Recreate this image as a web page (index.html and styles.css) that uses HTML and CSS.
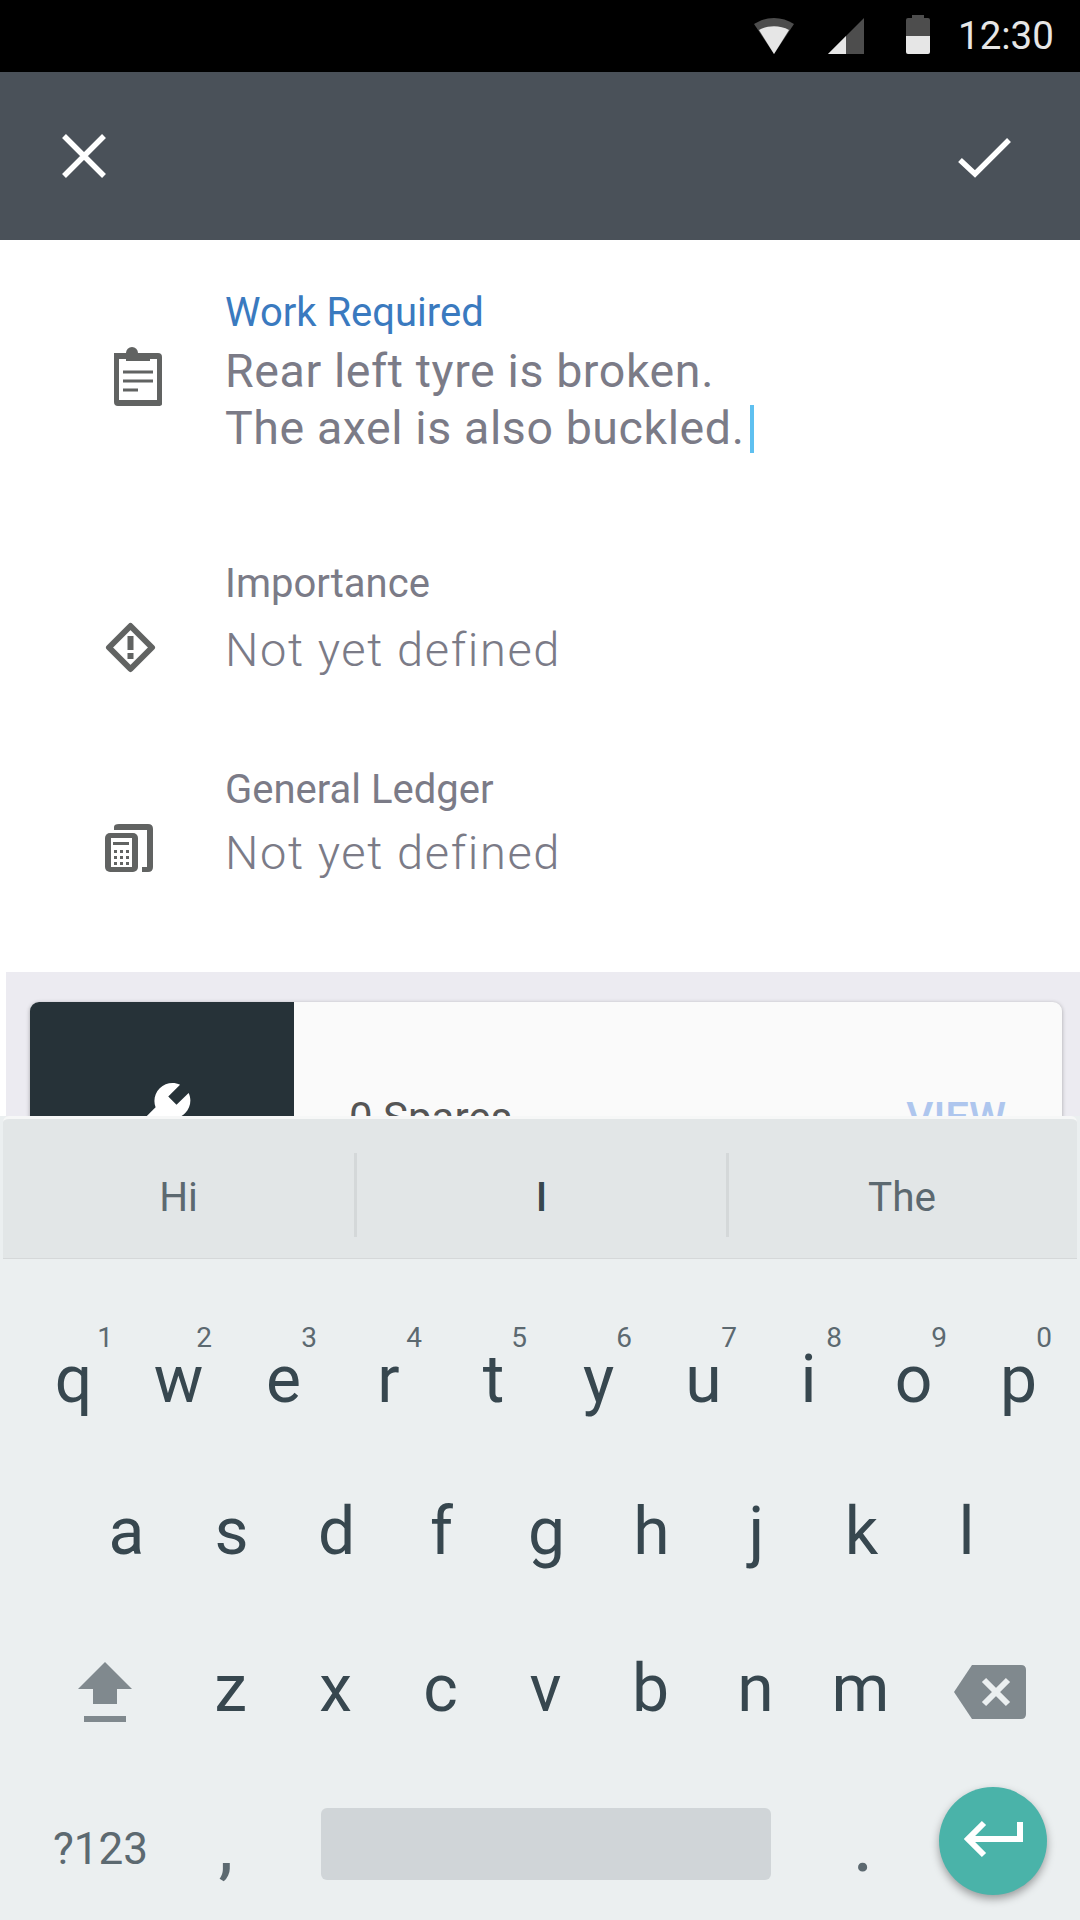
FILE: index.html
```html
<!DOCTYPE html>
<html lang="en">
  <head>
    <meta charset="UTF-8" />
    <meta name="viewport" content="width=device-width, initial-scale=1" />
    <title>Work Required</title>
    <link rel="stylesheet" href="styles.css">
  </head>
  <body>
    <div class="status-bar">
      <svg class="status-wifi" width="40" height="36" viewBox="0 0 40 36">
        <path d="M0 6 C12 -2 28 -2 40 6 L20 36 Z" fill="#4d4d4d"/>
        <path d="M5 12 C14 7 26 7 35 12 L20 36 Z" fill="#e6e6e6"/>
      </svg>
      <svg class="status-signal" width="36" height="36" viewBox="0 0 36 36">
        <path d="M36 0 V36 H0 Z" fill="#4d4d4d"/>
        <path d="M18 18 V36 H0 Z" fill="#e6e6e6"/>
      </svg>
      <svg class="status-battery" width="24" height="39" viewBox="0 0 24 39">
        <path d="M6 0 H18 V3 H22 Q24 3 24 5 V21 H0 V5 Q0 3 2 3 H6 Z" fill="#4d4d4d"/>
        <path d="M0 21 H24 V37 Q24 39 22 39 H2 Q0 39 0 37 Z" fill="#e6e6e6"/>
      </svg>
      <span class="status-time">12:30</span>
    </div>

    <div class="toolbar">
      <svg width="60" height="60" viewBox="0 0 60 60">
        <path d="M10 10 L50 50 M50 10 L10 50" stroke="#fff" stroke-width="5.5" fill="none"/>
      </svg>
      <svg width="60" height="60" viewBox="0 0 60 60">
        <path d="M7 34 L22 48 L56 14" stroke="#fff" stroke-width="5.5" fill="none"/>
      </svg>
    </div>

    <div class="content">
      <div class="field field-work">
        <div class="field-icon">
          <svg width="60" height="62" viewBox="0 0 60 62">
            <path d="M9 7 H21 A6 6 0 0 1 33 7 H53 Q57 7 57 11 V58 Q57 60 53 60 H13 Q9 60 9 56 Z" fill="#616362" transform="translate(0 1)"/>
            <rect x="14" y="14" width="38" height="41" fill="#fff"/>
            <rect x="21" y="8" width="24" height="8" fill="#616362"/>
            <path d="M18 27 H48 M18 36 H48 M18 45 H33" stroke="#616362" stroke-width="3" fill="none"/>
          </svg>
        </div>
        <div class="field-text">
          <div class="field-label active">Work Required</div>
          <div class="field-value typed">Rear left tyre is broken.<br>The axel is also buckled.<span class="cursor"></span></div>
        </div>
      </div>

      <div class="field field-importance">
        <div class="field-icon">
          <svg width="60" height="60" viewBox="0 0 60 60">
            <path d="M25.5 4 L4 25.5 L25.5 47 L47 25.5 Z" fill="none" stroke="#616362" stroke-width="6" stroke-linejoin="round"/>
            <rect x="22.5" y="14" width="6" height="14" fill="#616362"/>
            <rect x="22.5" y="31" width="6" height="6" fill="#616362"/>
          </svg>
        </div>
        <div class="field-text">
          <div class="field-label">Importance</div>
          <div class="field-value">Not yet defined</div>
        </div>
      </div>

      <div class="field field-ledger">
        <div class="field-icon">
          <svg width="60" height="60" viewBox="0 0 60 60">
            <path d="M9 3 Q9 0 14 0 H43 Q48 0 48 5 V43 Q48 48 43 48 H37 V43 H42 V6 H9 Z" fill="#616362"/>
            <rect x="0" y="9" width="33" height="39" rx="5" fill="#616362"/>
            <rect x="6" y="14" width="21" height="29" fill="#fff"/>
            <rect x="8" y="18" width="16" height="3" fill="#616362"/>
            <path d="M9 26 h3 v3 h-3z M15 26 h3 v3 h-3z M21 26 h3 v3 h-3z M9 32 h3 v3 h-3z M15 32 h3 v3 h-3z M21 32 h3 v3 h-3z M9 38 h3 v3 h-3z M15 38 h3 v3 h-3z M21 38 h3 v3 h-3z" fill="#616362"/>
          </svg>
        </div>
        <div class="field-text">
          <div class="field-label">General Ledger</div>
          <div class="field-value">Not yet defined</div>
        </div>
      </div>

      <div class="spares-panel">
        <div class="card">
          <div class="card-side">
            <svg width="66" height="66" viewBox="0 0 24 24">
              <path transform="matrix(-1 0 0 1 24 0)" fill="#fff" d="M22.7 19l-9.1-9.1c.9-2.3.4-5-1.5-6.9-2-2-5-2.4-7.4-1.3L9 6 6 9 1.6 4.7C.4 7.1.9 10.1 2.9 12.1c1.9 1.9 4.6 2.4 6.9 1.5l9.1 9.1c.4.4 1 .4 1.4 0l2.3-2.3c.5-.4.5-1.1.1-1.4z"/>
            </svg>
          </div>
          <div class="card-body">
            <span class="card-title">0 Spares</span>
            <span class="card-action">VIEW</span>
          </div>
        </div>
      </div>
    </div>

    <div class="keyboard">
      <div class="suggestions">
        <div class="suggestion">Hi</div>
        <div class="suggestion main">I</div>
        <div class="suggestion">The</div>
      </div>
      <div class="keys">
        <div class="key-row row-top">
          <div class="key">q<sup>1</sup></div>
          <div class="key">w<sup>2</sup></div>
          <div class="key">e<sup>3</sup></div>
          <div class="key">r<sup>4</sup></div>
          <div class="key">t<sup>5</sup></div>
          <div class="key">y<sup>6</sup></div>
          <div class="key">u<sup>7</sup></div>
          <div class="key">i<sup>8</sup></div>
          <div class="key">o<sup>9</sup></div>
          <div class="key">p<sup>0</sup></div>
        </div>
        <div class="key-row row-home">
          <div class="key">a</div>
          <div class="key">s</div>
          <div class="key">d</div>
          <div class="key">f</div>
          <div class="key">g</div>
          <div class="key">h</div>
          <div class="key">j</div>
          <div class="key">k</div>
          <div class="key">l</div>
        </div>
        <div class="key-row row-shift">
          <div class="key key-icon key-shift">
            <svg width="54" height="60" viewBox="0 0 54 60">
              <path d="M27 0 L54 27 H39 V42 H15 V27 H0 Z" fill="#80898e"/>
              <rect x="6" y="54" width="42" height="6" fill="#80898e"/>
            </svg>
          </div>
          <div class="key">z</div>
          <div class="key">x</div>
          <div class="key">c</div>
          <div class="key">v</div>
          <div class="key">b</div>
          <div class="key">n</div>
          <div class="key">m</div>
          <div class="key key-icon key-back">
            <svg width="72" height="54" viewBox="0 0 72 54">
              <path d="M18 0 H67 Q72 0 72 5 V49 Q72 54 67 54 H18 L0 27 Z" fill="#80898e"/>
              <path d="M30 15 L54 39 M54 15 L30 39" stroke="#ebeff0" stroke-width="6" fill="none"/>
            </svg>
          </div>
        </div>
        <div class="key-row row-bottom">
          <div class="key key-sym">?123</div>
          <div class="key key-punct">,</div>
          <div class="space-bar"></div>
          <div class="key key-punct key-dot">.</div>
          <div class="enter-key">
            <svg width="60" height="42" viewBox="0 0 60 42">
              <path d="M21 3 L5 19 L21 35 M5 19 H57 V2" stroke="#fff" stroke-width="6" fill="none"/>
            </svg>
          </div>
        </div>
      </div>
    </div>
  </body>
</html>
```

FILE: styles.css
```css
html,
body {
  margin: 0;
  padding: 0;
}
body {
  width: 1080px;
  height: 1920px;
  overflow: hidden;
  font-family: Roboto, "Liberation Sans", sans-serif;
  background-color: #fff;
}

/* status bar */
.status-bar {
  height: 72px;
  background-color: #000;
  display: flex;
  align-items: flex-start;
}
.status-wifi {
  margin: 18px 0 0 754px;
}
.status-signal {
  margin: 18px 0 0 34px;
}
.status-battery {
  margin: 15px 0 0 42px;
}
.status-time {
  margin: 11px 0 0 28px;
  font-size: 38.5px;
  line-height: 50px;
  color: #e6e6e6;
}

/* toolbar */
.toolbar {
  height: 168px;
  background-color: #4a5159;
  display: flex;
  justify-content: space-between;
  align-items: center;
  padding: 0 67px 0 54px;
}

/* form */
.content {
  height: 876px;
  overflow: hidden;
}
.field {
  display: flex;
  padding-left: 105px;
}
.field-icon {
  width: 120px;
  flex: none;
}
.field-label {
  font-size: 40px;
  line-height: 50px;
  color: #7b7b87;
}
.field-label.active {
  color: #3a7abf;
}
.field-value {
  font-size: 47px;
  line-height: 57px;
  font-weight: 300;
  letter-spacing: 1.6px;
  color: #7b7b87;
}
.field-value.typed {
  margin-top: 5px;
  font-size: 46.5px;
  font-weight: 400;
  letter-spacing: 0.6px;
}
.cursor {
  display: inline-block;
  width: 4px;
  height: 48px;
  margin-left: 5px;
  vertical-align: -9px;
  background-color: #5fc0f0;
}
.field-work {
  padding-top: 48px;
}
.field-work .field-icon {
  padding-top: 57px;
}
.field-importance {
  padding-top: 102px;
}
.field-importance .field-icon {
  padding-top: 63px;
}
.field-importance .field-value {
  margin-top: 12px;
}
.field-ledger {
  padding-top: 79px;
}
.field-ledger .field-icon {
  padding-top: 59px;
}
.field-ledger .field-value {
  margin-top: 9px;
}

/* spares card */
.spares-panel {
  margin: 84px 0 0 6px;
  height: 300px;
  padding: 30px 18px 0 24px;
  background-color: #ecebf1;
}
.card {
  display: flex;
  height: 222px;
  border-radius: 9px;
  overflow: hidden;
  background-color: #fafafa;
  box-shadow: 0 1px 4px rgba(0,0,0,0.3);
}
.card-side {
  width: 264px;
  flex: none;
  display: flex;
  align-items: center;
  justify-content: center;
  background-color: #263238;
}
.card-side svg {
  margin-right: 5px;
}
.card-body {
  flex: 1;
  display: flex;
  align-items: center;
  justify-content: space-between;
  padding: 8px 56px 0 55px;
}
.card-title {
  font-size: 42px;
  color: #555;
}
.card-action {
  font-size: 42px;
  font-weight: 500;
  color: #aec6ee;
}

/* keyboard */
.keyboard {
  height: 804px;
  background-color: #ebeff0;
  position: relative;
}
.suggestions {
  height: 127px;
  margin: 0 3px;
  padding-top: 12px;
  display: flex;
  align-items: center;
  background-color: #e2e6e7;
  border-top: 3px solid #f6f7f7;
  border-bottom: 1px solid #d5d8d9;
  border-radius: 6px 6px 0 0;
}
.suggestion {
  flex: 0 0 354px;
  box-sizing: border-box;
  height: 84px;
  line-height: 89px;
  text-align: center;
  font-size: 40.5px;
  color: #5c6970;
  border-right: 3px solid #d4d8d9;
}
.suggestion:last-child {
  flex: 1;
  padding-right: 2px;
  border-right: none;
}
.suggestion.main {
  flex: 0 0 372px;
  font-weight: 500;
  color: #37474f;
}
.keys {
  padding-top: 71px;
}
.key-row {
  display: flex;
}
.row-top {
  height: 152px;
  padding-left: 21px;
}
.row-home {
  height: 157px;
  padding-left: 74px;
}
.row-shift {
  height: 160px;
  padding-left: 52px;
}
.key {
  flex: 0 0 105px;
  position: relative;
  text-align: center;
  font-size: 66px;
  line-height: 100px;
  color: #37474f;
}
.key sup {
  position: absolute;
  top: -12px;
  right: 19px;
  font-size: 28px;
  line-height: 40px;
  color: #5c6970;
}
.key:first-child sup {
  right: 13px;
}
.key-icon {
  display: flex;
  justify-content: center;
}
.key-shift {
  margin-right: 21px;
}
.key-shift svg {
  margin-top: 23px;
}
.key-back {
  flex: 0 0 72px;
  margin-left: 41px;
}
.key-back svg {
  margin-top: 26px;
}
.row-bottom {
  align-items: flex-start;
}
.key-sym {
  flex: 0 0 95px;
  margin-left: 53px;
  font-size: 44px;
  color: #5c6970;
}
.key-punct {
  flex: 0 0 40px;
  margin-left: 58px;
  font-weight: 500;
  color: #5c6970;
}
.space-bar {
  flex: 0 0 450px;
  height: 72px;
  margin: 9px 0 0 75px;
  border-radius: 6px;
  background-color: #d0d5d8;
}
.key-dot {
  margin-left: 72px;
}
.enter-key {
  flex: 0 0 108px;
  height: 108px;
  margin: -12px 0 0 56px;
  display: flex;
  align-items: center;
  justify-content: center;
  border-radius: 50%;
  background-color: #4ab3a9;
  box-shadow: 0 4px 8px rgba(0,0,0,0.35);
}
```
